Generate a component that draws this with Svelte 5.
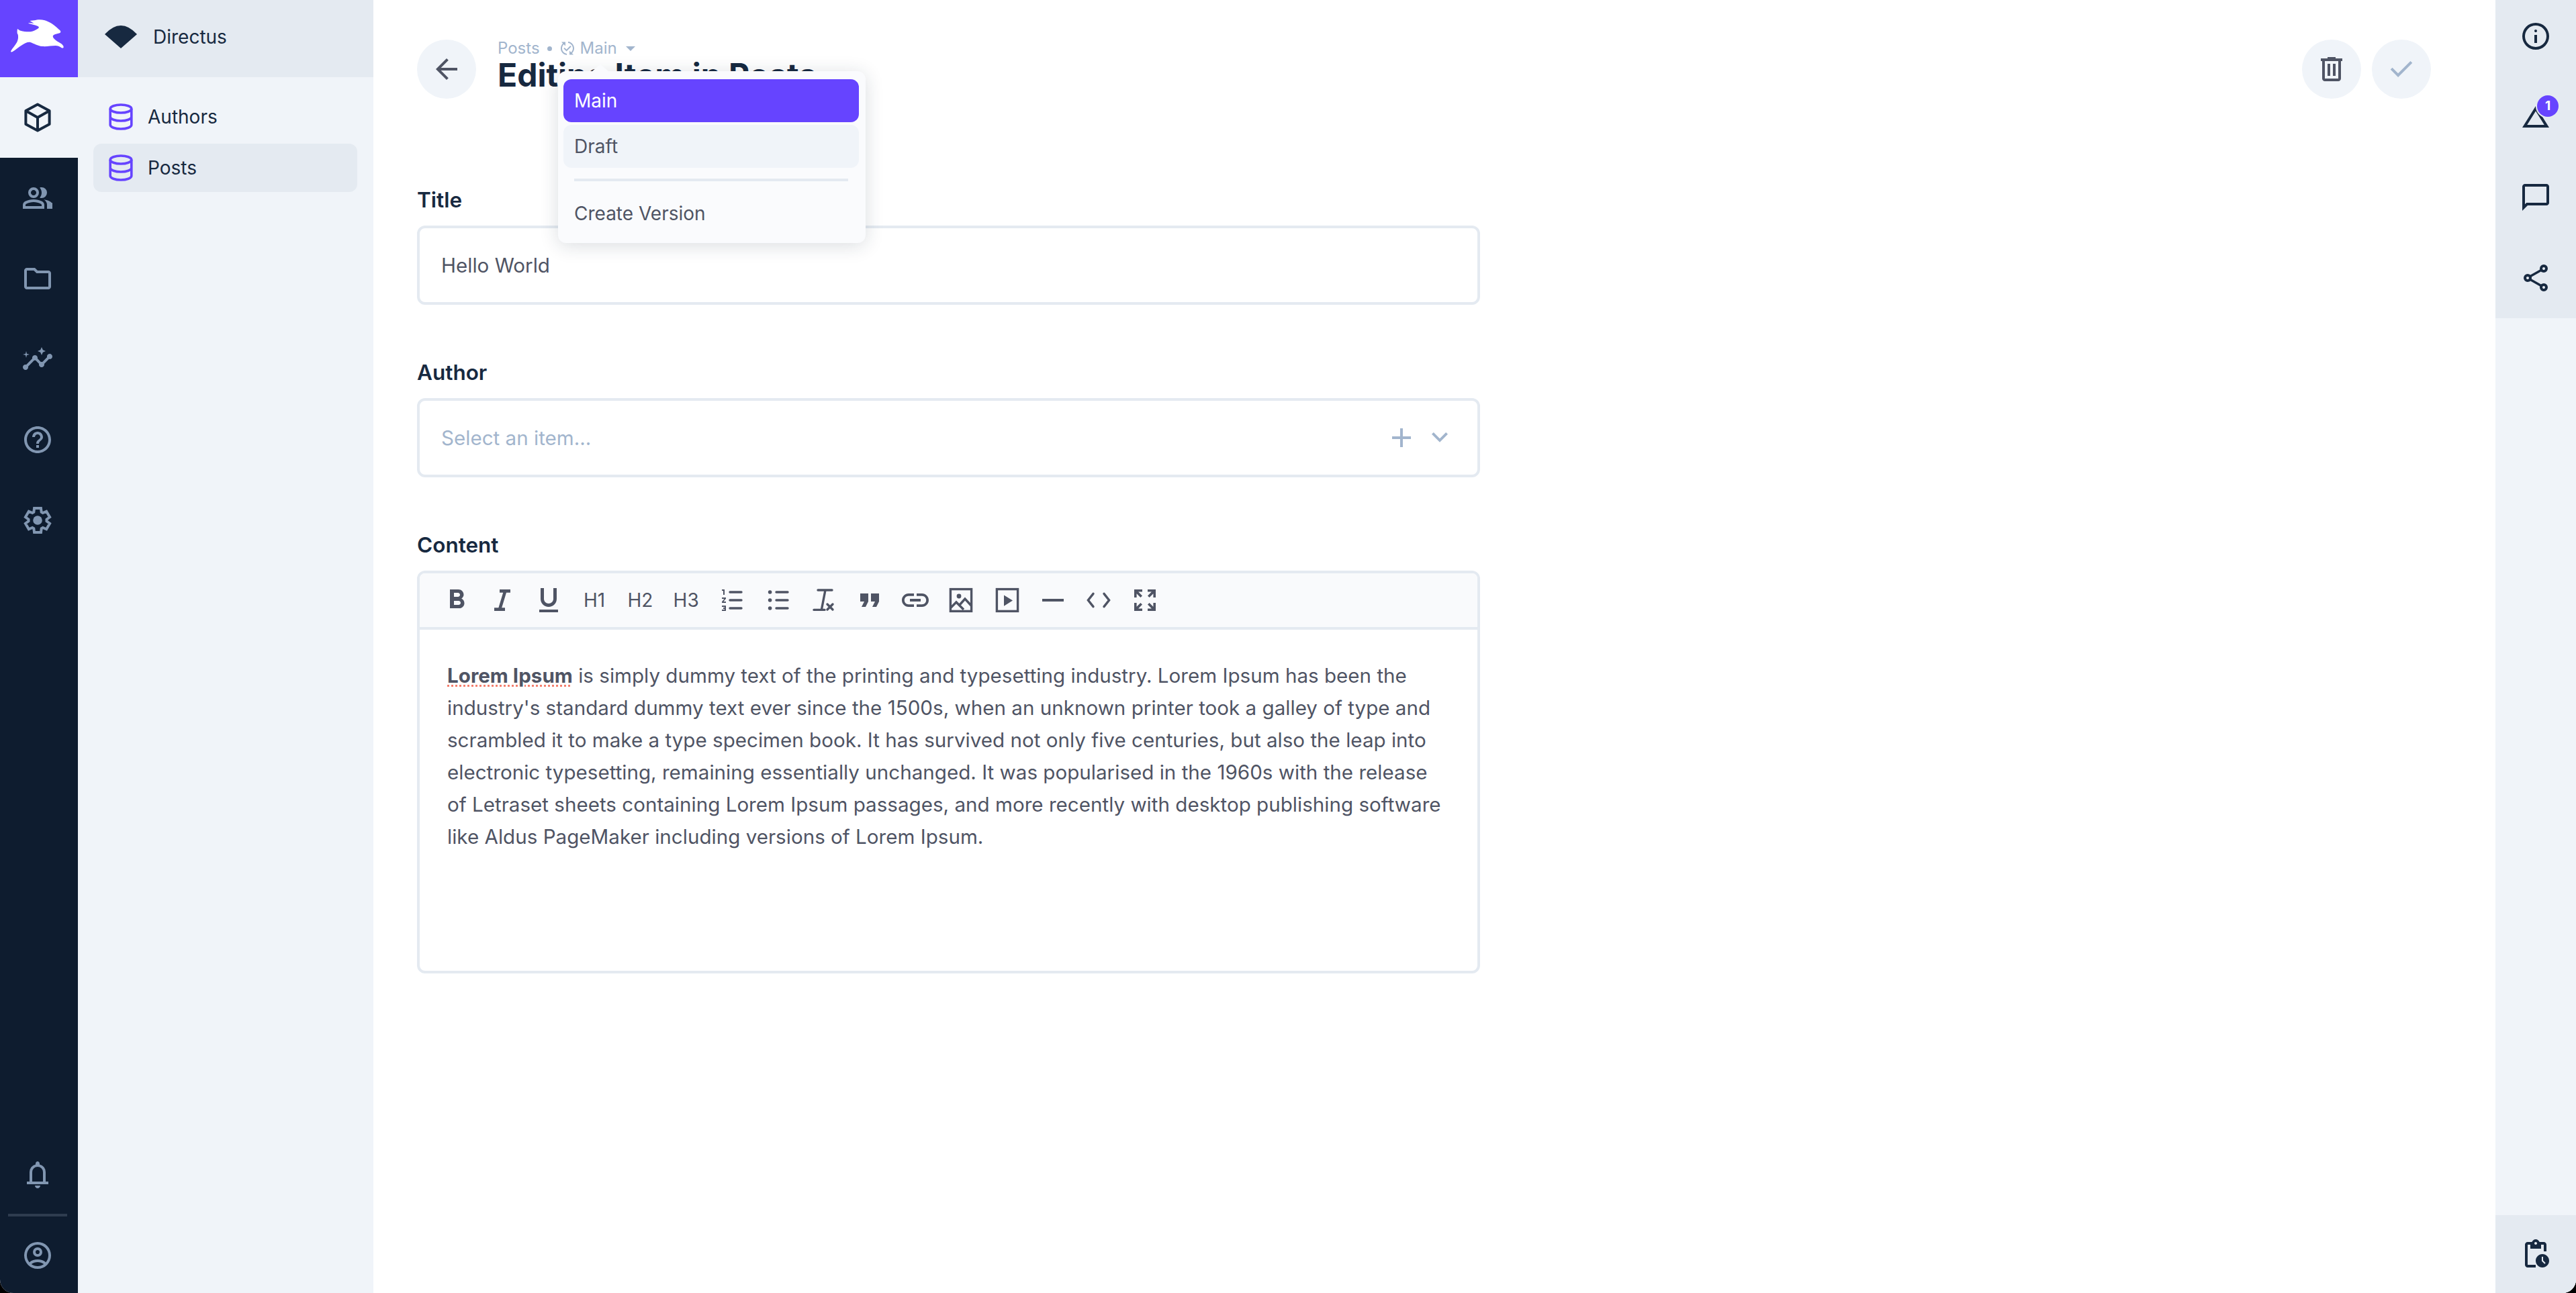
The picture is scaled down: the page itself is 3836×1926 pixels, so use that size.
<script>
  const modules = [
    { d: 'M9 12q-1.65 0-2.825-1.175Q5 9.65 5 8q0-1.65 1.175-2.825Q7.35 4 9 4q1.65 0 2.825 1.175Q13 6.35 13 8q0 1.65-1.175 2.825Q10.65 12 9 12ZM1 20v-2.8q0-.85.438-1.563.437-.712 1.162-1.087 1.55-.775 3.15-1.163Q7.35 13 9 13t3.25.387q1.6.388 3.15 1.163.725.375 1.162 1.087Q17 16.35 17 17.2V20Zm18 0v-3q0-1.1-.612-2.113-.613-1.012-1.738-1.737 1.275.15 2.4.512 1.125.363 2.1.888.9.5 1.375 1.112Q23 15.275 23 16v4Zm0-12q0 1.65-1.175 2.825Q16.65 12 15 12q-.275 0-.7-.062-.425-.063-.7-.138.675-.8 1.037-1.775Q15 9.05 15 8t-.363-2.025Q14.275 5 13.6 4.2q.35-.125.7-.163Q14.65 4 15 4q1.65 0 2.825 1.175Q19 6.35 19 8ZM3 18h12v-.8q0-.275-.137-.5-.138-.225-.363-.35-1.35-.675-2.725-1.013Q10.4 15 9 15t-2.775.337Q4.85 15.675 3.5 16.35q-.225.125-.362.35-.138.225-.138.5Zm6-8q.825 0 1.413-.588Q11 8.825 11 8t-.587-1.412Q9.825 6 9 6q-.825 0-1.412.588Q7 7.175 7 8t.588 1.412Q8.175 10 9 10Z' },
    { d: 'M4 20q-.825 0-1.412-.587Q2 18.825 2 18V6q0-.825.588-1.412Q3.175 4 4 4h6l2 2h8q.825 0 1.413.588Q22 7.175 22 8v10q0 .825-.587 1.413Q20.825 20 20 20Zm0-14v12h16V8h-8.825l-2-2H4Z' },
    { d: 'M21 8c-1.45 0-2.26 1.44-1.93 2.51l-3.55 3.56c-.3-.09-.74-.09-1.04 0l-2.55-2.55C12.27 10.45 11.46 9 10 9c-1.45 0-2.27 1.44-1.93 2.52l-4.56 4.55C2.44 15.74 1 16.55 1 18c0 1.1.9 2 2 2 1.45 0 2.26-1.44 1.93-2.51l4.55-4.56c.3.09.74.09 1.04 0l2.55 2.55C12.73 16.55 13.54 18 15 18c1.45 0 2.27-1.44 1.93-2.52l3.56-3.55c1.07.33 2.51-.48 2.51-1.93 0-1.1-.9-2-2-2zM15 9l.94-2.07L18 6l-2.06-.93L15 3l-.92 2.07L12 6l2.08.93zM3.5 11L4 9l2-.5L4 8l-.5-2L3 8l-2 .5L3 9z' },
    { d: 'M11 18h2v-2h-2v2zm1-16C6.48 2 2 6.48 2 12s4.48 10 10 10 10-4.48 10-10S17.52 2 12 2zm0 18c-4.41 0-8-3.59-8-8s3.59-8 8-8 8 3.59 8 8-3.59 8-8 8zm0-14c-2.21 0-4 1.79-4 4h2c0-1.1.9-2 2-2s2 .9 2 2c0 2-3 1.75-3 5h2c0-2.25 3-2.5 3-5 0-2.21-1.79-4-4-4z' }
  ];

  const sidebar = [
    'M11 17h2v-6h-2v6Zm1-8q.425 0 .713-.288Q13 8.425 13 8t-.287-.713Q12.425 7 12 7t-.712.287Q11 7.575 11 8t.288.712Q11.575 9 12 9Zm0 13q-2.075 0-3.9-.788-1.825-.787-3.175-2.137-1.35-1.35-2.137-3.175Q2 14.075 2 12t.788-3.9q.787-1.825 2.137-3.175 1.35-1.35 3.175-2.138Q9.925 2 12 2t3.9.787q1.825.788 3.175 2.138 1.35 1.35 2.138 3.175Q22 9.925 22 12t-.787 3.9q-.788 1.825-2.138 3.175-1.35 1.35-3.175 2.137Q14.075 22 12 22Zm0-2q3.35 0 5.675-2.325Q20 15.35 20 12q0-3.35-2.325-5.675Q15.35 4 12 4 8.65 4 6.325 6.325 4 8.65 4 12q0 3.35 2.325 5.675Q8.65 20 12 20Z',
    'M12 7.77L18.39 18H5.61L12 7.77M12 4L2 20h20L12 4z',
    'M2 22V4q0-.825.588-1.413Q3.175 2 4 2h16q.825 0 1.413.587Q22 3.175 22 4v12q0 .825-.587 1.413Q20.825 18 20 18H6Zm2-4.85L5.15 16H20V4H4Z',
    'M18 22q-1.25 0-2.125-.875T15 19q0-.175.025-.363.025-.187.075-.337l-7.05-4.1q-.425.375-.95.587Q6.575 15 6 15q-1.25 0-2.125-.875T3 12q0-1.25.875-2.125T6 9q.575 0 1.1.212.525.213.95.588l7.05-4.1q-.05-.15-.075-.337Q15 5.175 15 5q0-1.25.875-2.125T18 2q1.25 0 2.125.875T21 5q0 1.25-.875 2.125T18 8q-.575 0-1.1-.213-.525-.212-.95-.587L8.9 11.3q.05.15.075.337Q9 11.825 9 12t-.025.362q-.025.188-.075.338l7.05 4.1q.425-.375.95-.587Q17.425 16 18 16q1.25 0 2.125.875T21 19q0 1.25-.875 2.125T18 22Zm0-16q.425 0 .713-.287Q19 5.425 19 5t-.287-.713Q18.425 4 18 4t-.712.287Q17 4.575 17 5t.288.713Q17.575 6 18 6ZM6 13q.425 0 .713-.288Q7 12.425 7 12t-.287-.713Q6.425 11 6 11t-.713.287Q5 11.575 5 12t.287.712Q5.575 13 6 13Zm12 7q.425 0 .713-.288Q19 19.425 19 19t-.287-.712Q18.425 18 18 18t-.712.288Q17 18.575 17 19t.288.712Q17.575 20 18 20Z'
  ];

  const collections = ['Authors', 'Posts'];
</script>

<div class="app">
  <nav class="modules">
    <div class="logo">
      <svg width="100" height="70" viewBox="0 0 300 210">
        <path fill="#fff" d="M130 31c12-4 30-5 46 0 22 7 44 22 58 36 6 6 13 10 13 14 0 7-8 8-16 10-7 2-14 3-18 8-2 4 0 9 5 14 8 8 18 14 30 21 6 4 12 10 12 16 0 5-5 6-10 3-8-5-16-9-26-9-18 0-40 5-60 3-20-2-36-12-52-18-12-3-24 4-36 11-16 9-30 22-44 31-5 3-9 1-7-4 6-12 19-24 27-39 6-12 6-24 4-34-4-3-4-15-2-25 5 3 8 7 14 8 18 4 36 7 52 3 12-3 21-9 28-14 3-3 1-7-3-9-12-6-28-9-43-13 5-2 17-1 26 1-6-4-14-9-19-12z"/>
      </svg>
    </div>
    <div class="module active">
      <svg class="icon" viewBox="0 0 24 24" fill="none" stroke="currentColor" stroke-width="2" stroke-linejoin="round"><path d="M12 2.2 20.8 7v10L12 21.800 3.200 17V7ZM3.200 7l8.800 5 8.800-5M12 12v9.800"/></svg>
    </div>
    {#each modules as m}
      <div class="module"><svg class="icon" viewBox="0 0 24 24" fill="currentColor"><path d={m.d}/></svg></div>
    {/each}
    <div class="module">
      <svg class="icon" viewBox="0 0 24 24"><g transform="translate(12 12) scale(.9) translate(-12 -12)"><path fill="none" stroke="currentColor" stroke-width="2.2" d="m9.250 22-.4-3.200-1.175-.675L4.700 19.375l-2.750-4.750 2.575-1.950v-1.350L1.950 9.375l2.750-4.750 2.975 1.250 1.175-.675.4-3.200h5.500l.4 3.200 1.175.675 2.975-1.250 2.750 4.750-2.575 1.950v1.350l2.575 1.950-2.750 4.750-2.950-1.250-1.175.675-.4 3.200Z"/></g><circle cx="12" cy="12" r="3.400" fill="currentColor"/></svg>
    </div>
    <div class="module-spacer"></div>
    <div class="module bell">
      <svg class="icon" viewBox="0 0 24 24" fill="currentColor"><path d="M4 19v-2h2v-7q0-2.075 1.25-3.688Q8.5 4.7 10.5 4.2v-.7q0-.625.438-1.062Q11.375 2 12 2t1.062.438q.438.437.438 1.062v.7q2 .5 3.25 2.112Q18 7.925 18 10v7h2v2Zm8 3q-.825 0-1.412-.587Q10 20.825 10 20h4q0 .825-.587 1.413Q12.825 22 12 22Zm-4-5h8v-7q0-1.65-1.175-2.825Q13.65 6 12 6q-1.65 0-2.825 1.175Q8 8.35 8 10Z"/></svg>
    </div>
    <div class="module-divider"></div>
    <div class="module avatar">
      <svg class="icon" viewBox="0 0 24 24" fill="currentColor"><path d="M5.85 17.1q1.275-.975 2.85-1.538Q10.275 15 12 15t3.3.562q1.575.563 2.85 1.538.875-1.025 1.363-2.325Q20 13.475 20 12q0-3.325-2.337-5.662Q15.325 4 12 4T6.338 6.338Q4 8.675 4 12q0 1.475.487 2.775.488 1.3 1.363 2.325ZM12 13q-1.475 0-2.488-1.012Q8.5 10.975 8.5 9.5t1.012-2.488Q10.525 6 12 6t2.488 1.012Q15.5 8.025 15.5 9.5t-1.012 2.488Q13.475 13 12 13Zm0 9q-2.075 0-3.9-.788-1.825-.787-3.175-2.137-1.35-1.35-2.137-3.175Q2 14.075 2 12t.788-3.9q.787-1.825 2.137-3.175 1.35-1.35 3.175-2.138Q9.925 2 12 2t3.9.787q1.825.788 3.175 2.138 1.35 1.35 2.138 3.175Q22 9.925 22 12t-.787 3.9q-.788 1.825-2.138 3.175-1.35 1.35-3.175 2.137Q14.075 22 12 22Zm0-2q1.325 0 2.5-.387 1.175-.388 2.15-1.113-.975-.725-2.15-1.113Q13.325 17 12 17t-2.5.387q-1.175.388-2.15 1.113.975.725 2.15 1.113Q10.675 20 12 20Zm0-9q.65 0 1.075-.425.425-.425.425-1.075 0-.65-.425-1.075Q12.65 8 12 8q-.65 0-1.075.425Q10.5 8.85 10.5 9.5q0 .65.425 1.075Q11.35 11 12 11Z"/></svg>
    </div>
  </nav>

  <aside class="nav">
    <div class="project">
      <svg width="48" height="34" viewBox="0 0 48 34"><path fill="#172940" d="M0 13Q24-13 48 13L24 34Z"/></svg>
      <span>Directus</span>
    </div>
    <ul class="collections">
      {#each collections as name}
        <li class:active={name === 'Posts'}>
          <svg class="icon" viewBox="0 0 24 24" fill="none" stroke="#6644ff" stroke-width="1.8"><ellipse cx="12" cy="6" rx="7.9" ry="3"/><path d="M4.1 6v12c0 1.66 3.5 3 7.9 3s7.9-1.34 7.9-3V6M4.1 12c0 1.66 3.5 3 7.9 3s7.9-1.34 7.9-3"/></svg>
          <span>{name}</span>
        </li>
      {/each}
    </ul>
  </aside>

  <main class="page">
    <header class="header">
      <button class="round" aria-label="Back">
        <svg class="icon" viewBox="0 0 24 24" fill="#4f5464"><path d="M12 20 4 12l8-8 1.425 1.4-5.6 5.6H20v2H7.825l5.6 5.6Z"/></svg>
      </button>
      <div class="heading">
        <div class="crumbs">
          <span>Posts</span>
          <i class="dot"></i>
          <svg width="24" height="24" viewBox="0 0 24 24" fill="#a2b5cd"><path d="M17.66 9.53l-7.07 7.07-4.24-4.24 1.41-1.41 2.83 2.83 5.66-5.66 1.41 1.41zM4 12c0-2.33 1.02-4.42 2.62-5.88L9 8.5v-6H3l2.2 2.2C3.24 6.52 2 9.11 2 12c0 5.19 3.95 9.45 9 9.95v-2.02c-3.94-.49-7-3.86-7-7.93zm18 0c0-5.19-3.95-9.45-9-9.95v2.02c3.94.49 7 3.86 7 7.93 0 2.33-1.02 4.42-2.62 5.88L15 15.5v6h6l-2.2-2.2c1.96-1.82 3.2-4.41 3.2-7.3z"/></svg>
          <span>Main</span>
          <i class="caret"></i>
        </div>
        <h1>Editing Item in Posts</h1>
      </div>
      <div class="actions">
        <button class="round" aria-label="Delete">
          <svg class="icon" viewBox="0 0 24 24" fill="#4f5464"><path d="M7 21q-.825 0-1.412-.587Q5 19.825 5 19V6H4V4h5V3h6v1h5v2h-1v13q0 .825-.587 1.413Q17.825 21 17 21ZM17 6H7v13h10ZM9 17h2V8H9Zm4 0h2V8h-2Z"/></svg>
        </button>
        <button class="round" aria-label="Save">
          <svg class="icon" viewBox="0 0 24 24" fill="#a2b5cd"><path d="M9.55 18 3.85 12.3l1.425-1.425L9.55 15.15l9.175-9.175L20.15 7.4Z"/></svg>
        </button>
      </div>

      <div class="menu">
        <div class="menu-item current">Main</div>
        <div class="menu-item hover">Draft</div>
        <hr />
        <div class="menu-item create">Create Version</div>
      </div>
    </header>

    <form class="form">
      <div class="field">
        <label for="title">Title</label>
        <div class="input" id="title">Hello World</div>
      </div>
      <div class="field">
        <label for="author">Author</label>
        <div class="input placeholder" id="author">
          <span>Select an item...</span>
          <svg class="icon plus" viewBox="0 0 24 24" fill="#a2b5cd"><path d="M11 19v-6H5v-2h6V5h2v6h6v2h-6v6Z"/></svg>
          <svg class="icon chev" viewBox="0 0 24 24" fill="#a2b5cd"><path d="m12 15.4-6-6L7.4 8l4.6 4.6L16.6 8 18 9.4Z"/></svg>
        </div>
      </div>
      <div class="field">
        <label for="content">Content</label>
        <div class="editor" id="content">
          <div class="toolbar">
            <span class="tool"><svg class="icon" viewBox="0 0 24 24"><path d="M15.6 10.79c.97-.67 1.65-1.77 1.65-2.79 0-2.26-1.75-4-4-4H7v14h7.04c2.09 0 3.71-1.7 3.71-3.79 0-1.52-.86-2.82-2.15-3.42zM10 6.5h3c.83 0 1.5.67 1.5 1.5s-.67 1.5-1.5 1.5h-3v-3zm3.5 9H10v-3h3.5c.83 0 1.5.67 1.5 1.5s-.67 1.5-1.5 1.5z"/></svg></span>
            <span class="tool"><svg class="icon" viewBox="0 0 24 24"><path d="M10 4v2.4h2.6L9.2 17.6H6V20h8v-2.4h-2.4L15 6.4h3V4z"/></svg></span>
            <span class="tool"><svg class="icon" viewBox="0 0 24 24"><path d="M12 17c3.31 0 6-2.69 6-6V3h-2.5v8c0 1.93-1.57 3.5-3.5 3.5S8.5 12.93 8.5 11V3H6v8c0 3.31 2.69 6 6 6zm-7 2v2h14v-2H5z"/></svg></span>
            <span class="tool txt">H1</span>
            <span class="tool txt">H2</span>
            <span class="tool txt">H3</span>
            <span class="tool"><svg class="icon" viewBox="0 0 24 24"><path transform="translate(2.5 0)" d="M2 17h2v.5H3v1h1v.5H2v1h3v-4H2v1zm1-9h1V4H2v1h1v3zm-1 3h1.8L2 13.1v.9h3v-1H3.2L5 10.9V10H2v1z"/><path class="ln" d="M10.5 6h8.5M10.5 12h8.5M10.5 18h8.5"/></svg></span>
            <span class="tool"><svg class="icon" viewBox="0 0 24 24"><circle cx="6.3" cy="6" r="1.4"/><circle cx="6.3" cy="12" r="1.4"/><circle cx="6.3" cy="18" r="1.4"/><path class="ln" d="M11 6h8.5M11 12h8.5M11 18h8.5"/></svg></span>
            <span class="tool"><svg class="icon" viewBox="0 0 24 24"><path class="ln" d="M7.5 4.5h10.500M13 4.500 10.200 19M4.500 19.200h8M14.500 15l4 4M18.500 15l-4 4"/></svg></span>
            <span class="tool"><svg class="icon" viewBox="0 0 24 24"><path d="M6 17h3l2-4V7H5v6h3zm8 0h3l2-4V7h-6v6h3z"/></svg></span>
            <span class="tool"><svg class="icon" viewBox="0 0 24 24"><path d="M3.9 12c0-1.71 1.39-3.1 3.1-3.1h4V7H7c-2.76 0-5 2.24-5 5s2.24 5 5 5h4v-1.9H7c-1.71 0-3.1-1.39-3.1-3.1zM8 13h8v-2H8v2zm9-6h-4v1.9h4c1.71 0 3.1 1.39 3.1 3.1s-1.39 3.1-3.1 3.1h-4V17h4c2.76 0 5-2.24 5-5s-2.24-5-5-5z"/></svg></span>
            <span class="tool"><svg class="icon" viewBox="0 0 24 24"><rect class="ln sq" x="4.200" y="3.800" width="15.600" height="16.400"/><circle cx="10.500" cy="9" r="1.700"/><path class="ln sq" d="m4.500 17.500 4-4 5.500 5.500M11 15.500l4-4.500 4.600 5"/></svg></span>
            <span class="tool"><svg class="icon" viewBox="0 0 24 24"><rect class="ln sq" x="4.200" y="3.800" width="15.600" height="16.400"/><path d="M9.500 8.200v8.200l6.500-4.100z"/></svg></span>
            <span class="tool"><svg class="icon" viewBox="0 0 24 24"><path d="M4 11h16v2H4z"/></svg></span>
            <span class="tool"><svg class="icon" viewBox="0 0 24 24"><path class="ln" d="M8 7.200 4.200 12 8 16.800M16 7.200l3.800 4.800-3.800 4.800"/></svg></span>
            <span class="tool"><svg class="icon" viewBox="0 0 24 24"><path d="M4 4h6v1.800H7.100L10 8.700 8.700 10 5.800 7.100V10H4zM14 4h6v6h-1.800V7.100L15.300 10 14 8.700 16.900 5.800H14zM4 14h1.800v2.900L8.700 14 10 15.300 7.100 18.200H10V20H4zM15.300 14l2.900 2.900V14H20v6h-6v-1.800h2.900L14 15.300z"/></svg></span>
          </div>
          <div class="body">
            <p><strong>Lorem Ipsum</strong> is simply dummy text of the printing and typesetting industry. Lorem Ipsum has been the industry's standard dummy text ever since the 1500s, when an unknown printer took a galley of type and scrambled it to make a type specimen book. It has survived not only five centuries, but also the leap into electronic typesetting, remaining essentially unchanged. It was popularised in the 1960s with the release of Letraset sheets containing Lorem Ipsum passages, and more recently with desktop publishing software like Aldus PageMaker including versions of Lorem Ipsum.</p>
          </div>
        </div>
      </div>
    </form>
  </main>

  <aside class="sidebar">
    <div class="side-top">
      {#each sidebar as d, i}
        <div class="side-btn">
          <svg class="icon" viewBox="0 0 24 24" fill="#172940"><path {d}/></svg>
          {#if i === 1}<span class="badge">1</span>{/if}
        </div>
      {/each}
    </div>
    <div class="side-bottom">
      <svg class="icon" viewBox="0 0 24 24" fill="#172940"><path d="M17 12c-2.76 0-5 2.24-5 5s2.24 5 5 5 5-2.24 5-5-2.24-5-5-5zm1.65 7.35L16.500 17.200V14h1v2.790l1.850 1.850-.7.71zM18 3h-3.180C14.400 1.840 13.300 1 12 1s-2.400.84-2.820 2H6c-1.100 0-2 .9-2 2v15c0 1.100.9 2 2 2h6v-2H6V5h2v3h8V5h2v5h2V5c0-1.100-.9-2-2-2zm-6 2c-.55 0-1-.45-1-1s.45-1 1-1 1 .45 1 1-.45 1-1 1z"/></svg>
    </div>
  </aside>
</div>

<style>
  :global(body) { margin: 0; background: #000; }

  .app {
    display: grid;
    grid-template-columns: 116px 440px 1fr 120px;
    height: 100vh;
    background: #fff;
    color: #4f5464;
    font-family: Inter, "Noto Sans", sans-serif;
    font-size: 29.6px;
    border-radius: 0 0 20px 20px;
    overflow: hidden;
  }

  .icon { width: 48px; height: 48px; display: block; flex: none; }

  /* module bar */
  .modules { display: flex; flex-direction: column; background: #0e1c2f; color: #8196b1; }
  .logo { height: 115px; background: #6644ff; display: flex; align-items: center; justify-content: center; box-sizing: border-box; padding-bottom: 5px; }
  .module { height: 120px; flex: none; display: flex; align-items: center; justify-content: center; padding-right: 4px; box-sizing: border-box; }
  .module.active { background: #f0f4f9; color: #172940; }
  .module-spacer { flex: 1; }
  .module.bell { height: 116px; }
  .module-divider { height: 4px; margin: 0 16px 0 12px; background: #2e3c4f; flex: none; }
  .module.avatar { height: 116px; margin-bottom: -2px; }

  /* navigation */
  .nav { background: #f0f4f9; font-size: 28px; }
  .project { height: 115px; background: #e4eaf1; display: flex; align-items: center; gap: 24px; padding: 0 0 5px 40px; color: #172940; box-sizing: border-box; }
  .collections { list-style: none; margin: 0; padding: 23px 24px 0 23px; }
  .collections li { height: 72px; margin-bottom: 4px; display: flex; align-items: center; gap: 16px; padding-left: 17px; border-radius: 12px; color: #172940; }
  .collections li.active { background: #e4eaf1; }

  /* page */
  .page { padding: 59px 96px 0 65px; min-width: 0; }
  .header { position: relative; display: flex; align-items: flex-start; height: 88px; }
  .round { width: 88px; height: 88px; border: 0; padding: 0; border-radius: 50%; background: #f0f4f9; display: flex; align-items: center; justify-content: center; flex: none; }
  .heading { margin-left: 32px; flex: 1; padding-top: 1px; }
  .crumbs { display: flex; align-items: center; gap: 7px; font-size: 24px; line-height: 24px; color: #a2b5cd; }
  .crumbs span + .dot { margin: 0 4px; }
  .dot { width: 7px; height: 7px; border-radius: 50%; background: #a2b5cd; }
  .caret { width: 0; height: 0; margin-left: 6px; border: 7px solid transparent; border-top-color: #a2b5cd; border-bottom: 0; }
  h1 { margin: 1px 0 0; font-size: 48px; line-height: 54px; font-weight: 700; color: #172940; white-space: nowrap; }
  .actions { display: flex; gap: 16px; }

  /* version menu, over the title */
  .menu { position: absolute; left: 210px; top: 47px; width: 458px; box-sizing: border-box; padding: 12px 10px 6px 8px; background: #fafbfd; border-radius: 12px; box-shadow: 0 4px 28px rgba(23, 41, 64, .16); font-size: 28px; }
  .menu::before { content: ""; position: absolute; left: 51px; top: -10px; width: 24px; height: 10px; background: #fafbfd; clip-path: polygon(50% 0, 100% 100%, 0 100%); }
  .menu-item { height: 64px; display: flex; align-items: center; padding-left: 16px; border-radius: 12px; }
  .menu-item.current { background: #6644ff; color: #fff; margin-bottom: 4px; }
  .menu-item.hover { background: #f0f4f9; }
  .menu-item.create { height: 76px; }
  .menu hr { height: 4px; border: 0; margin: 16px 16px 10px; background: #e4eaf1; }

  /* form */
  .form { width: 1583px; margin-top: 127px; display: flex; flex-direction: column; gap: 77px; }
  label { display: block; height: 48px; margin-bottom: 14px; line-height: 48px; font-size: 31.5px; font-weight: 600; color: #172940; }
  .input { height: 118px; box-sizing: border-box; border: 4px solid #e4eaf1; border-radius: 12px; padding: 0 32px; display: flex; align-items: center; color: #4f5464; }
  .placeholder { color: #a2b5cd; padding-right: 32px; }
  .placeholder span { flex: 1; }
  .placeholder .chev { margin-left: 9px; }
  .editor { height: 600px; box-sizing: border-box; border: 4px solid #e4eaf1; border-radius: 12px; }
  .toolbar { height: 84px; box-sizing: border-box; display: flex; align-items: center; padding-left: 21px; background: #f9fafc; border-bottom: 4px solid #e4eaf1; border-radius: 8px 8px 0 0; }
  .tool { width: 68.3px; flex: none; display: flex; justify-content: center; }
  .tool svg { fill: #4f5464; }
  .tool .ln { fill: none; stroke: #4f5464; stroke-width: 1.7; stroke-linecap: round; }
  .tool .sq { stroke-linecap: butt; }
  .txt { font-size: 28px; line-height: 48px; }
  .body { padding: 44px 41px 0; }
  .body p { margin: 0; line-height: 48px; }
  .body strong { font-weight: 700; text-decoration: underline dotted #f4806f 3px; text-underline-offset: 3px; }

  /* right sidebar */
  .sidebar { display: flex; flex-direction: column; justify-content: space-between; background: #f0f4f9; }
  .side-top { height: 474px; background: #e4eaf1; }
  .side-btn { position: relative; height: 120px; display: flex; align-items: center; justify-content: center; }
  .side-btn:first-child { height: 108px; margin-bottom: 6px; }
  .badge { position: absolute; left: 62px; top: 28px; width: 32px; height: 32px; border-radius: 50%; background: #6644ff; color: #fff; font-size: 19px; font-weight: 700; line-height: 32px; text-align: center; box-shadow: 0 0 0 2px #e4eaf1; }
  .side-bottom { height: 116px; background: #e4eaf1; display: flex; align-items: center; justify-content: center; }
</style>
